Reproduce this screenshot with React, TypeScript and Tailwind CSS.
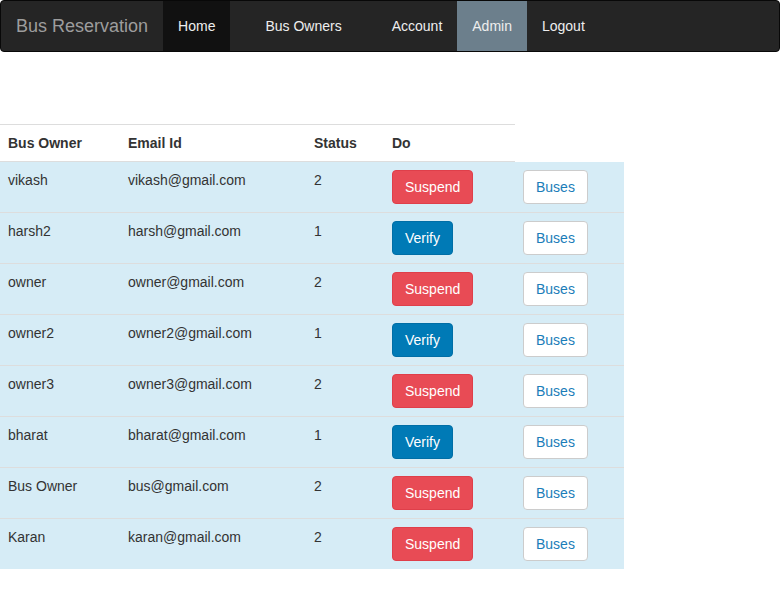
import React from "react";

const rows = [
  { name: "vikash", email: "vikash@gmail.com", status: "2" },
  { name: "harsh2", email: "harsh@gmail.com", status: "1" },
  { name: "owner", email: "owner@gmail.com", status: "2" },
  { name: "owner2", email: "owner2@gmail.com", status: "1" },
  { name: "owner3", email: "owner3@gmail.com", status: "2" },
  { name: "bharat", email: "bharat@gmail.com", status: "1" },
  { name: "Bus Owner", email: "bus@gmail.com", status: "2" },
  { name: "Karan", email: "karan@gmail.com", status: "2" },
];

export default function App() {
  return (
    <div
      className="min-h-[589px] bg-white text-[14px] text-[#333]"
      style={{ fontFamily: '"Liberation Sans", Arial, sans-serif' }}
    >
      <nav className="flex h-[52px] items-stretch rounded-[4px] border border-[#080808] bg-[#252525]">
        <div className="flex items-center pl-[15px] pr-[15px] text-[18px] text-[#9d9d9d]">Bus Reservation</div>
        <a className="flex items-center bg-[#111] px-[15px] text-[#eee]">Home</a>
        <a className="ml-[20px] flex items-center px-[15px] text-[#eee]">Bus Owners</a>
        <a className="ml-[20px] flex items-center px-[15px] text-[#eee]">Account</a>
        <a className="flex items-center bg-[#6c7f8c] px-[15px] text-[#eee]">Admin</a>
        <a className="flex items-center px-[15px] text-[#eee]">Logout</a>
      </nav>

      <div className="mt-[72px] w-[624px]">
        <div className="flex w-[515px] border-y border-[#ddd] font-bold leading-[20px]">
          <div className="w-[120px] p-2">Bus Owner</div>
          <div className="w-[186px] p-2">Email Id</div>
          <div className="w-[78px] p-2">Status</div>
          <div className="w-[131px] p-2">Do</div>
        </div>
        {rows.map((r, i) => (
          <div
            key={i}
            className={`flex bg-[#d6ecf6] leading-[20px] ${i > 0 ? "border-t border-[#ddd]" : ""}`}
          >
            <div className="w-[120px] p-2">{r.name}</div>
            <div className="w-[186px] p-2">{r.email}</div>
            <div className="w-[78px] p-2">{r.status}</div>
            <div className="w-[131px] p-2">
              {r.status === "2" ? (
                <button className="rounded-[4px] border border-[#df3f4a] bg-[#e84b55] px-3 py-[6px] leading-[20px] text-white">
                  Suspend
                </button>
              ) : (
                <button className="rounded-[4px] border border-[#006ea6] bg-[#007ab6] px-3 py-[6px] leading-[20px] text-white">
                  Verify
                </button>
              )}
            </div>
            <div className="w-[109px] p-2">
              <button className="rounded-[4px] border border-[#ccc] bg-white px-3 py-[6px] leading-[20px] text-[#1a7db9]">
                Buses
              </button>
            </div>
          </div>
        ))}
      </div>
    </div>
  );
}
